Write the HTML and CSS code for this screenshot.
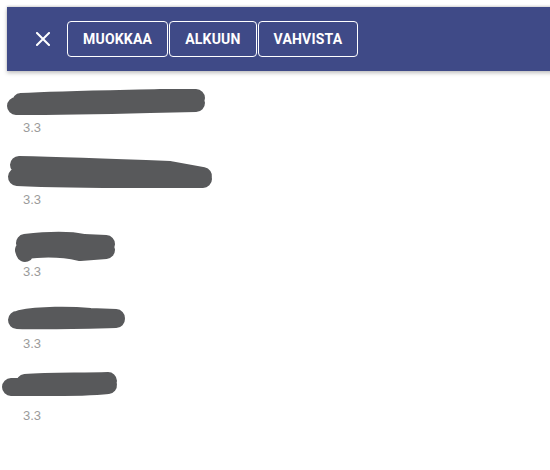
FILE: index.html
```html
<!DOCTYPE html>
<html lang="fi">
<head>
<meta charset="utf-8">
<link rel="stylesheet" href="styles.css">
</head>
<body>
<div class="page">
  <header class="toolbar">
    <button class="close" aria-label="Sulje">
      <svg width="14" height="14" viewBox="0 0 14 14"><path d="M1 1L13 13M13 1L1 13" stroke="#fff" stroke-width="2" stroke-linecap="square"/></svg>
    </button>
    <div class="actions">
      <button class="btn">Muokkaa</button>
      <button class="btn">Alkuun</button>
      <button class="btn">Vahvista</button>
    </div>
  </header>
  <ul class="list">
    <li class="item">
      <svg class="redact" width="230" height="36" viewBox="0 0 230 36"><path d="M21 18 C60 16 120 15 160 14 L196 14 M16 22 C60 22 110 21 150 20 L196 19" /></svg>
      <span class="meta">3.3</span>
    </li>
    <li class="item">
      <svg class="redact" width="230" height="36" viewBox="0 0 230 36"><path d="M19 9 C70 10 120 12 170 14 L203 20 M17 21 C80 24 130 23 203 23" /></svg>
      <span class="meta">3.3</span>
    </li>
    <li class="item">
      <svg class="redact" width="230" height="36" viewBox="0 0 230 36"><path d="M25 15 C50 12 70 12 84 15 L106 16 M25 25 L24 22 C40 20 60 19 80 24 L106 22" /></svg>
      <span class="meta">3.3</span>
    </li>
    <li class="item">
      <svg class="redact" width="230" height="36" viewBox="0 0 230 36"><path d="M20 19 C40 15 70 15 90 17 L116 18 M17 20 C50 21 80 20 116 19" /></svg>
      <span class="meta">3.3</span>
    </li>
    <li class="item">
      <svg class="redact" width="230" height="36" viewBox="0 0 230 36"><path d="M25 11 C50 9 80 10 108 9 M11 15 C40 15 80 16 108 13" /></svg>
      <span class="meta">3.3</span>
    </li>
  </ul>
</div>
</body>
</html>
```

FILE: styles.css
```css
html, body {
  margin: 0;
  padding: 0;
  background: #ffffff;
  overflow: hidden;
  font-family: Roboto, "Liberation Sans", Arial, sans-serif;
}

.page {
  padding: 7px 0 0 7px;
}

.toolbar {
  width: 560px;
  height: 64px;
  box-sizing: border-box;
  background: #3f4a87;
  display: flex;
  align-items: center;
  padding-left: 24px;
  box-shadow: 0 2px 4px rgba(0, 0, 0, 0.25), 0 -1px 2px rgba(0, 0, 0, 0.15);
}

.close {
  width: 24px;
  height: 24px;
  padding: 0;
  border: 0;
  background: transparent;
  display: flex;
  align-items: center;
  justify-content: center;
  margin-right: 12px;
}

.actions {
  display: flex;
  gap: 1px;
}

.btn {
  height: 36px;
  box-sizing: border-box;
  padding: 0 15px;
  border: 1px solid #ffffff;
  border-radius: 4px;
  background: transparent;
  color: #ffffff;
  font-family: Roboto, "Liberation Sans", Arial, sans-serif;
  font-size: 14px;
  font-weight: 700;
  text-transform: uppercase;
  letter-spacing: 0.2px;
}

.list {
  list-style: none;
  margin: 13px 0 0 0;
  padding: 0;
  display: flex;
  flex-direction: column;
  gap: 21px;
}

.item {
  display: flex;
  flex-direction: column;
  margin-left: -7px;
}

.redact {
  display: block;
  overflow: visible;
}

.redact path {
  fill: none;
  stroke: #58595b;
  stroke-width: 18;
  stroke-linecap: round;
  stroke-linejoin: round;
}

.meta {
  display: block;
  padding-left: 23px;
  font-family: "Liberation Sans", Arial, sans-serif;
  font-size: 13px;
  line-height: 15px;
  color: #9b9b9b;
}
```
